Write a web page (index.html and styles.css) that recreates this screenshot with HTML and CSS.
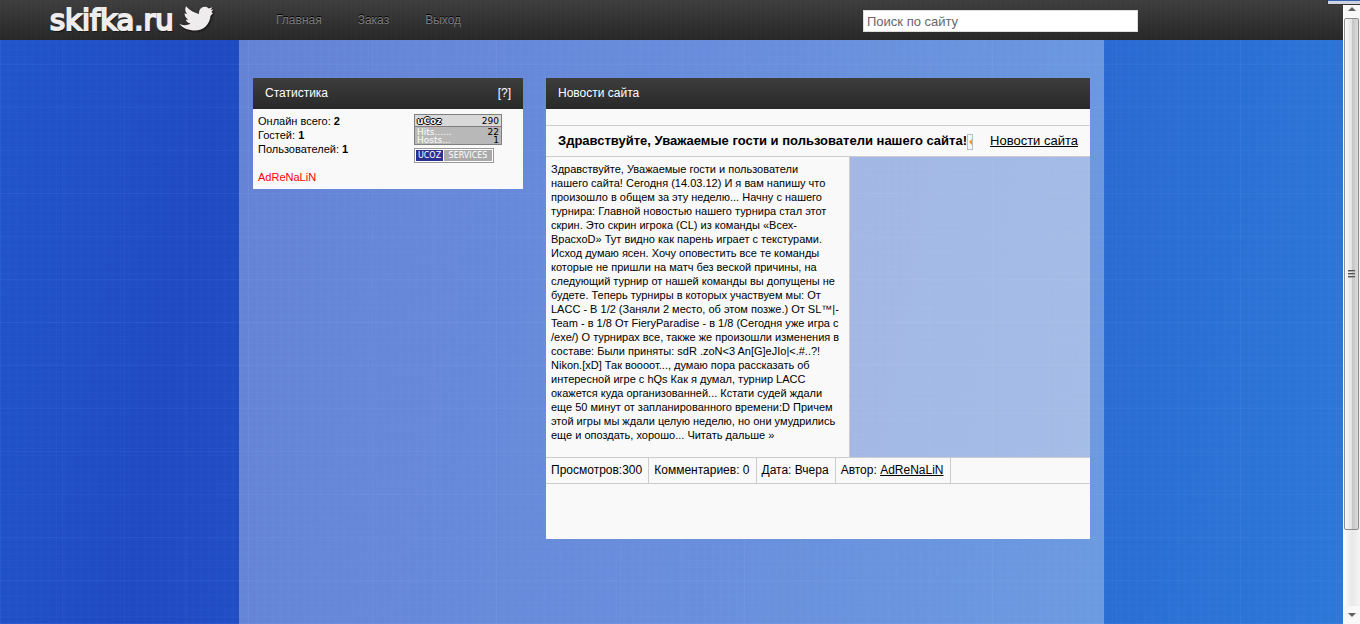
FILE: index.html
```html
<!DOCTYPE html>
<html lang="ru">
<head>
<meta charset="utf-8">
<title>skifka.ru</title>
<link rel="stylesheet" href="styles.css">
</head>
<body>
<div class="window">
  <div class="page">
    <header class="topbar">
      <a class="logo" href="#">
        <span class="logo-text">skifka.ru</span>
        <svg class="logo-bird" viewBox="0 0 36 27" aria-hidden="true"><path d="M35 8.200C34 9 33.300 10 32.500 11C31.800 19.500 25.500 25.500 17 25.500C11 25.500 5 23.500 1 18.500C4.500 20.700 9 20.800 12.500 18.500C10 18 8.300 16.800 7.800 14.800L10.200 14.500C7.700 13 6.400 11 6.600 8.300L9 9C7 6.600 6.700 4 8 1.300C11.700 5.500 16.300 7.900 21 8.900C20.700 4.700 23.300 1.700 26.700 1.700C28.500 1.700 29.800 2.300 30.800 3.400L34.400 2.300L32.800 5L35.500 4.600L33.400 7Z"/></svg>
      </a>
      <nav class="menu">
        <a href="#">Главная</a>
        <a href="#">Заказ</a>
        <a href="#">Выход</a>
      </nav>
      <input class="search" type="search" aria-label="Поиск по сайту" placeholder="Поиск по сайту">
    </header>
    <div class="container">
      <aside class="stats">
        <div class="panel-head"><span>Статистика</span><a href="#">[?]</a></div>
        <div class="stats-body">
          <div class="stats-text">
            <div>Онлайн всего: <b>2</b></div>
            <div>Гостей: <b>1</b></div>
            <div>Пользователей: <b>1</b></div>
            <a class="online-user" href="#">AdReNaLiN</a>
          </div>
          <div class="badges">
            <div class="counter">
              <div class="counter-row counter-top"><b>uCoz</b><span>290</span></div>
              <div class="counter-row"><i>Hits......</i><span>22</span></div>
              <div class="counter-row"><i>Hosts...</i><span>1</span></div>
            </div>
            <div class="services"><b>UCOZ</b><span>SERVICES</span></div>
          </div>
        </div>
      </aside>
      <main class="news">
        <div class="panel-head"><span>Новости сайта</span></div>
        <article>
          <div class="post-head">
            <h2>Здравствуйте, Уважаемые гости и пользователи нашего сайта!</h2>
            <button class="toggle" aria-label="Свернуть"></button>
            <a class="category" href="#">Новости сайта</a>
          </div>
          <div class="post-body">
            <p>Здравствуйте, Уважаемые гости и пользователи<br>
            нашего сайта! Сегодня (14.03.12) И я вам напишу что<br>
            произошло в общем за эту неделю... Начну с нашего<br>
            турнира: Главной новостью нашего турнира стал этот<br>
            скрин. Это скрин игрока (CL) из команды «Всех-<br>
            ВрасхоD» Тут видно как парень играет с текстурами.<br>
            Исход думаю ясен. Хочу оповестить все те команды<br>
            которые не пришли на матч без веской причины, на<br>
            следующий турнир от нашей команды вы допущены не<br>
            будете. Теперь турниры в которых участвуем мы: От<br>
            LACC - В 1/2 (Заняли 2 место, об этом позже.) От SL™|-<br>
            Team - в 1/8 От FieryParadise - в 1/8 (Сегодня уже игра с<br>
            /exe/) О турнирах все, также же произошли изменения в<br>
            составе: Были приняты: sdR .zoN&lt;3 An[G]eJIo|&lt;.#..?!<br>
            Nikon.[xD] Так воооот..., думаю пора рассказать об<br>
            интересной игре с hQs Как я думал, турнир LACC<br>
            окажется куда организованней... Кстати судей ждали<br>
            еще 50 минут от запланированного времени:D Причем<br>
            этой игры мы ждали целую неделю, но они умудрились<br>
            еще и опоздать, хорошо... <a href="#">Читать дальше »</a></p>
          </div>
          <div class="post-meta">
            <span>Просмотров:300</span>
            <span>Комментариев: 0</span>
            <span>Дата: Вчера</span>
            <span>Автор: <a href="#">AdReNaLiN</a></span>
          </div>
        </article>
      </main>
    </div>
  </div>
  <div class="scrollbar" aria-hidden="true">
    <div class="arrow arrow-up"></div>
    <div class="track"><div class="thumb"><i></i><i></i><i></i></div></div>
    <div class="arrow arrow-down"></div>
  </div>
  <div class="popup-edge"></div>
</div>
</body>
</html>
```
FILE: styles.css
```css
* { box-sizing: border-box; }
body {
  margin: 0;
  font-family: "Liberation Sans", Arial, sans-serif;
  font-size: 12px;
  color: #000;
}
.window { display: flex; height: 100vh; overflow: hidden; position: relative; }
.page {
  flex: 1;
  display: flex;
  flex-direction: column;
  background:
    repeating-linear-gradient(0deg, rgba(255,255,255,.015) 0 1px, transparent 1px 4px, rgba(0,0,0,.012) 4px 5px, transparent 5px 7px),
    repeating-linear-gradient(90deg, rgba(255,255,255,.015) 0 1px, transparent 1px 5px, rgba(0,0,0,.012) 5px 6px, transparent 6px 8px),
    repeating-linear-gradient(0deg, rgba(120,180,255,.08) 0 1px, transparent 1px 43px),
    repeating-linear-gradient(90deg, rgba(120,180,255,.06) 0 1px, transparent 1px 62px),
    linear-gradient(100deg, #2256cb 0%, #1f4bc2 16%, #2453c8 34%, #2763cf 65%, #2e78da 100%);
}
.topbar {
  flex: none;
  display: flex;
  align-items: center;
  height: 40px;
  padding: 0 205px 0 50px;
  background:
    repeating-linear-gradient(90deg, rgba(255,255,255,.012) 0 2px, transparent 2px 5px),
    linear-gradient(#3e3e3e, #272727);
}
.logo { display: flex; align-items: center; width: 226px; color: #eeecec; text-decoration: none; }
.logo-text {
  width: 128px;
  font-family: "DejaVu Sans", sans-serif;
  font-size: 29px;
  line-height: 36px;
  -webkit-text-stroke: 2px #eeecec;
  stroke-linejoin: round;
  text-shadow: 1px 2px 1px #111;
}
.logo-bird { width: 36px; height: 27px; margin-top: -3px; fill: #eeecec; filter: drop-shadow(1px 1px 1px #111); }
.menu { display: flex; gap: 36px; flex: 1; }
.menu a { color: #7d7d7d; text-decoration: none; text-shadow: 0 -1px 0 #000; }
.search {
  width: 275px;
  height: 22px;
  margin: 2px 0 0;
  padding: 0 3px;
  border: 1px solid #ddd;
  background: #fff;
  font: 13px "Liberation Sans", Arial, sans-serif;
  appearance: none;
}
.search::placeholder { color: #666; opacity: 1; }
.container {
  flex: 1;
  display: flex;
  align-items: flex-start;
  gap: 23px;
  width: 865px;
  margin: 0 auto;
  padding: 38px 14px;
  background: rgba(255,255,255,.31);
}
.stats { width: 270px; }
.news { flex: 1; min-width: 0; }
.panel-head {
  display: flex;
  justify-content: space-between;
  padding: 0 12px;
  line-height: 31px;
  color: #fff;
  background: linear-gradient(#3d3d3d, #292929);
}
.panel-head a { color: #fff; text-decoration: none; }
.stats-body {
  display: flex;
  justify-content: space-between;
  padding: 5px 21px 5px 5px;
  background: #f9f9f9;
  font-size: 11px;
  line-height: 14px;
}
.online-user { display: block; margin-top: 14px; color: #f00; text-decoration: none; }
.badges { display: flex; flex-direction: column; gap: 3px; }
.counter {
  width: 88px;
  height: 31px;
  border: 1px solid #808080;
  background: #b8b8b8;
  font: 9px/8px "DejaVu Sans", sans-serif;
}
.counter-row { display: flex; justify-content: space-between; padding: 0 2px; }
.counter-row i { font-style: normal; color: #fff; }
.counter-top {
  height: 12px;
  margin-bottom: 1px;
  border-bottom: 1px solid #808080;
  background: #d8d8d8;
  line-height: 12px;
}
.counter-top b {
  color: #fff;
  text-shadow: 1px 0 #000, -1px 0 #000, 0 1px #000, 0 -1px #000;
}
.services {
  display: flex;
  width: 80px;
  height: 15px;
  padding: 1px;
  border: 1px solid #999;
  background: #fff;
  color: #fff;
  font: 8px/11px "DejaVu Sans", sans-serif;
  text-align: center;
}
.services b { width: 27px; margin-right: 1px; background: #2b2f90; font-weight: normal; }
.services span { flex: 1; background: #aaa; }
article { border-top: 16px solid #f9f9f9; }
.post-head {
  display: flex;
  align-items: center;
  height: 32px;
  padding: 0 12px;
  border: solid #ccc;
  border-width: 1px 0;
  background: #f9f9f9;
  white-space: nowrap;
}
.post-head h2 { margin: 0; font-size: 13px; line-height: 30px; }
.toggle { width: 6px; height: 16px; margin: 2px 0 0; padding: 0; border: 1px solid #b4bec6; background: #f4f6f8; }
.toggle::before {
  content: "";
  display: block;
  border: solid transparent;
  border-width: 3px 3px 3px 0;
  border-right-color: #f90;
}
.category { margin-left: auto; color: #000; font-size: 13px; line-height: 30px; }
.post-body { background: rgba(249,240,243,.4); }
.post-body p {
  width: 304px;
  margin: 0;
  padding: 5px 0 15px 5px;
  border-right: 1px solid #ccc;
  background: #f9f9f9;
  font-size: 11px;
  line-height: 14px;
  white-space: nowrap;
}
.post-body a { color: #000; text-decoration: none; }
.post-meta {
  display: flex;
  border: solid #ccc;
  border-width: 1px 0;
  background: #f9f9f9;
  line-height: 25px;
}
.post-meta span { padding: 0 6px 0 5px; border-right: 1px solid #ccc; }
.post-meta a { color: #000; }
article::after { content: ""; display: block; height: 55px; background: #f9f9f9; }
.scrollbar {
  display: flex;
  flex-direction: column;
  width: 17px;
  padding-left: 1px;
  background: linear-gradient(90deg, #fff 0 1px, #e8e8e8, #f4f4f4);
}
.arrow { display: flex; align-items: center; justify-content: center; height: 18px; background: #f8f8f8; }
.arrow::before { content: ""; border: solid transparent; border-width: 0 4px 4px; border-bottom-color: #606060; }
.arrow-down::before { border-width: 4px 4px 0; border-top-color: #606060; }
.track { flex: 1; }
.thumb {
  display: flex;
  flex-direction: column;
  align-items: center;
  justify-content: center;
  gap: 1px;
  width: 15px;
  height: 87%;
  border: 1px solid #8b8b8b;
  border-radius: 2px;
  background: linear-gradient(90deg, #fafafa, #e2e2e2 50%, #c4c4c6 55%, #dcdcdc);
}
.thumb i { width: 7px; height: 2px; background: #555; border-bottom: 1px solid #aaa; }
.popup-edge {
  position: absolute;
  top: 0;
  right: 0;
  width: 33px;
  height: 5px;
  border: solid #333;
  border-width: 0 0 1px 1px;
  background: linear-gradient(#3a62b4 0 1px, #d0d4dc 1px);
}
```
